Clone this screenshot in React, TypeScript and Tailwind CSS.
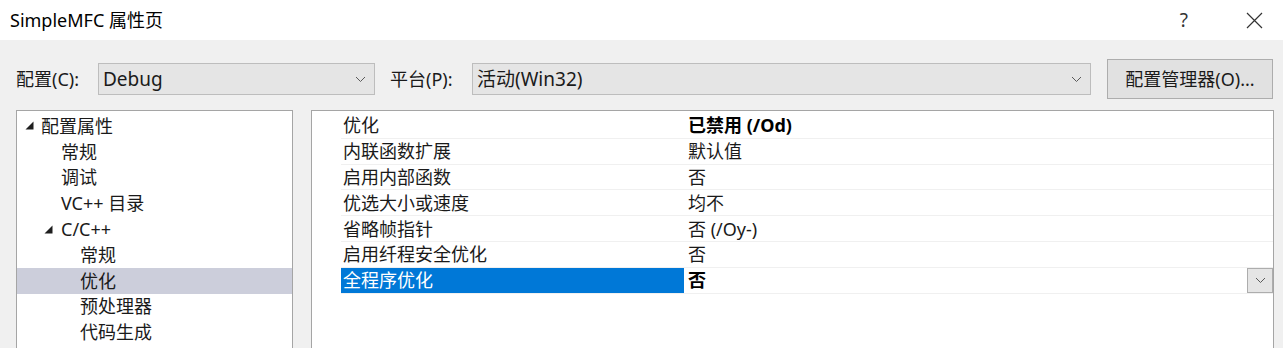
import React from "react";

const FONT = { fontFamily: '"Noto Sans", "Noto Sans CJK SC", sans-serif' };

function Chevron({ className = "" }: { className?: string }) {
  return (
    <svg width="11" height="7" viewBox="0 0 11 7" className={className}>
      <path d="M1 1 L5.5 5.5 L10 1" fill="none" stroke="#5a5a5a" strokeWidth="1" />
    </svg>
  );
}

function Tri() {
  return (
    <svg width="9" height="9" viewBox="0 0 9 9" className="shrink-0">
      <path d="M8.5 0.5 L8.5 8.5 L0.5 8.5 Z" fill="#1e1e1e" />
    </svg>
  );
}

const treeItems: { label: string; indent: number; tri?: boolean; sel?: boolean }[] = [
  { label: "配置属性", indent: 0, tri: true },
  { label: "常规", indent: 1 },
  { label: "调试", indent: 1 },
  { label: "VC++ 目录", indent: 1 },
  { label: "C/C++", indent: 1, tri: true },
  { label: "常规", indent: 2 },
  { label: "优化", indent: 2, sel: true },
  { label: "预处理器", indent: 2 },
  { label: "代码生成", indent: 2 },
];

const props: { name: string; value: string; bold?: boolean; sel?: boolean }[] = [
  { name: "优化", value: "已禁用 (/Od)", bold: true },
  { name: "内联函数扩展", value: "默认值" },
  { name: "启用内部函数", value: "否" },
  { name: "优选大小或速度", value: "均不" },
  { name: "省略帧指针", value: "否 (/Oy-)" },
  { name: "启用纤程安全优化", value: "否" },
  { name: "全程序优化", value: "否", bold: true, sel: true },
];

export default function App() {
  return (
    <div
      className="w-[1283px] h-[348px] overflow-hidden bg-[#f0f0f0] text-[18px] text-[#1a1a1a] leading-none"
      style={FONT}
    >
      {/* Title bar */}
      <div className="h-[40px] bg-white flex items-center pl-[10px]">
        <span className="text-[18px] text-black">SimpleMFC 属性页</span>
        <span className="ml-auto mr-[58px] text-[19px] text-[#333]">?</span>
        <svg width="17" height="17" viewBox="0 0 17 17" className="mr-[20px]">
          <path d="M1 1 L16 16 M16 1 L1 16" stroke="#333" strokeWidth="1.2" />
        </svg>
      </div>

      {/* Config row */}
      <div className="mt-[19px] pl-[16px] flex items-center h-[40px]">
        <span className="w-[82px]">配置(C):</span>
        <div className="w-[277px] h-[32px] bg-[#e5e5e5] border border-[#bdbdbd] flex items-center pl-[4px] pr-[8px]">
          <span className="text-[19px]">Debug</span>
          <Chevron className="ml-auto" />
        </div>
        <span className="w-[82px] ml-[15px]">平台(P):</span>
        <div className="w-[619px] h-[32px] bg-[#e5e5e5] border border-[#bdbdbd] flex items-center pl-[4px] pr-[8px]">
          <span className="text-[19px]">活动(Win32)</span>
          <Chevron className="ml-auto" />
        </div>
        <div className="ml-[16px] w-[166px] h-[40px] bg-[#e1e1e1] border border-[#adadad] flex items-center justify-center">
          <span>配置管理器(O)...</span>
        </div>
      </div>

      {/* Panels */}
      <div className="mt-[11px] pl-[16px] flex gap-[18px]">
        <div className="w-[277px] h-[260px] bg-white border border-[#a5a5a5] pt-[2px]">
          {treeItems.map((it, i) => (
            <div
              key={i}
              className={`h-[25.8px] flex items-center ${it.sel ? "bg-[#cccedb]" : ""}`}
              style={{ paddingLeft: it.indent === 0 ? 8 : it.indent === 1 ? 44 : 63 }}
            >
              {it.tri && it.indent === 0 && <span className="mr-[7px] flex"><Tri /></span>}
              {it.tri && it.indent === 1 && (
                <span className="ml-[-17px] mr-[8px] flex"><Tri /></span>
              )}
              <span>{it.label}</span>
            </div>
          ))}
        </div>

        <div className="w-[963px] h-[260px] bg-white border border-[#a5a5a5] pt-[2px] pl-[29px]">
          {props.map((p, i) => (
            <div key={i} className="h-[25.8px] flex border-b border-[#f0f0f0]">
              <div
                className={`w-[343px] flex items-center pl-[2px] ${p.sel ? "bg-[#0078d7] text-white" : ""}`}
              >
                {p.name}
              </div>
              <div className={`flex-1 flex items-center pl-[4px] ${p.bold ? "font-bold text-black" : ""}`}>
                {p.value}
                {p.sel && (
                  <div className="ml-auto w-[26px] h-full bg-[#e5e5e5] border border-[#adadad] flex items-center justify-center">
                    <Chevron />
                  </div>
                )}
              </div>
            </div>
          ))}
        </div>
      </div>
    </div>
  );
}
